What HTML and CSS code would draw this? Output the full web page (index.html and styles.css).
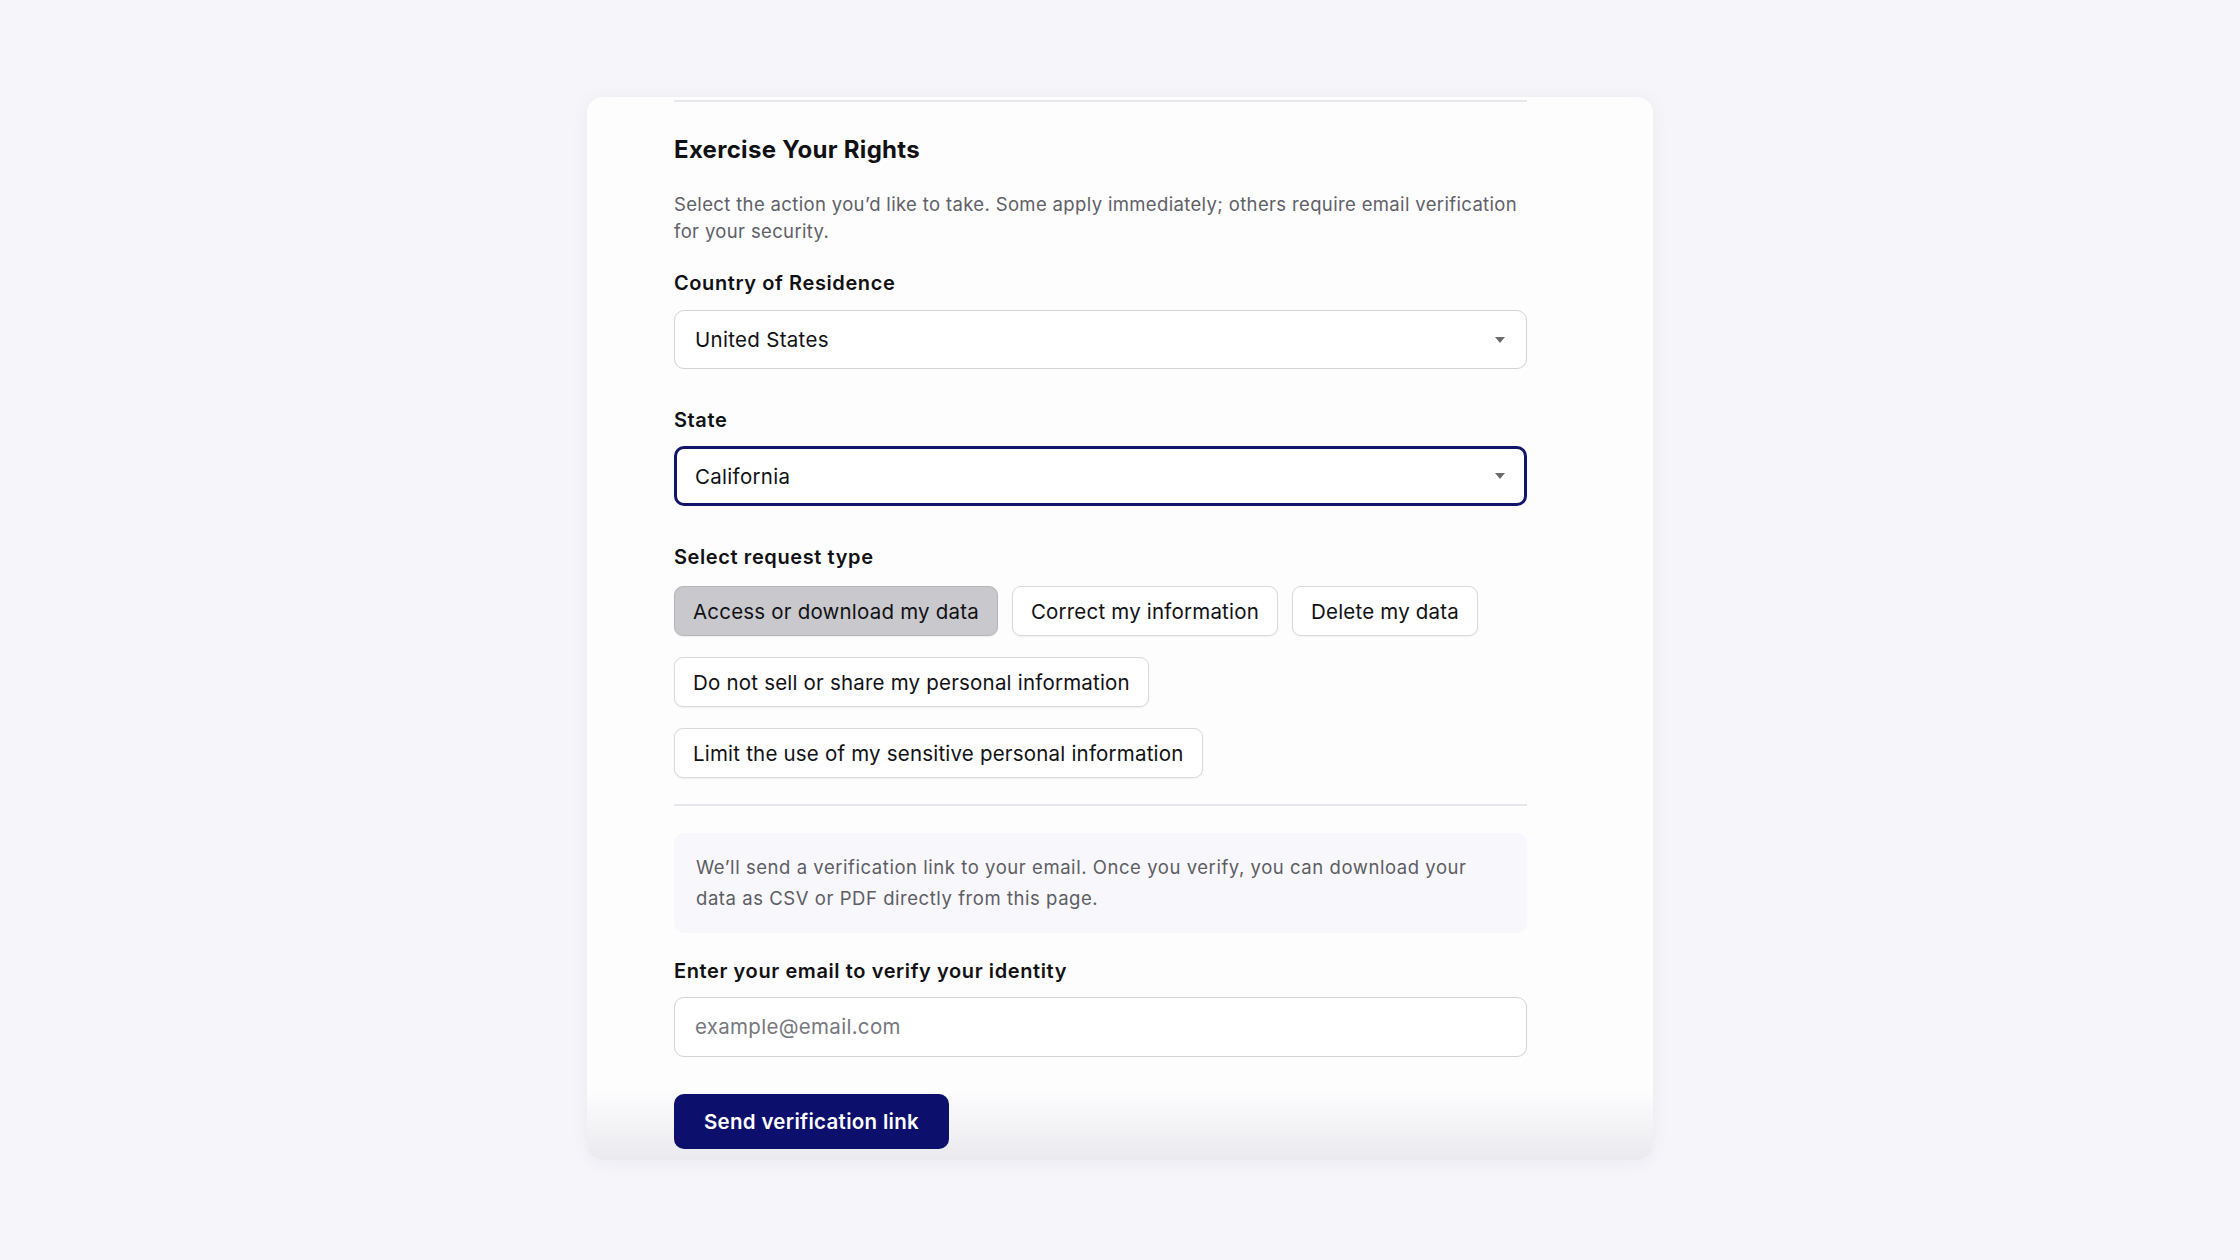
FILE: index.html
```html
<!DOCTYPE html>
<html lang="en">
<head>
  <meta charset="UTF-8" />
  <meta name="viewport" content="width=device-width, initial-scale=1.0"/>
  <title>Exercise Your Rights</title>
  <link rel="stylesheet" href="styles.css">
</head>
<body>
  <div class="rights-card">
    <hr class="divider divider-top" />

    <h2>Exercise Your Rights</h2>
    <p class="intro">Select the action you’d like to take. Some apply immediately; others require email verification for your security.</p>

    <label class="field-label" for="pais">Country of Residence</label>
    <div class="select-box">
      <span>United States</span>
      <svg class="caret" width="10" height="6" viewBox="0 0 10 6"><path d="M0 0h10L5 6z" fill="#6b6b70"/></svg>
    </div>

    <label class="field-label" for="estado">State</label>
    <div class="select-box focused">
      <span>California</span>
      <svg class="caret" width="10" height="6" viewBox="0 0 10 6"><path d="M0 0h10L5 6z" fill="#6b6b70"/></svg>
    </div>

    <label class="field-label">Select request type</label>
    <div class="chips">
      <button class="chip selected">Access or download my data</button>
      <button class="chip">Correct my information</button>
      <button class="chip">Delete my data</button>
      <button class="chip">Do not sell or share my personal information</button>
      <button class="chip">Limit the use of my sensitive personal information</button>
    </div>

    <hr class="divider divider-mid" />

    <div class="info-box">
      We’ll send a verification link to your email. Once you verify, you can download your data as CSV or PDF directly from this page.
    </div>

    <label class="field-label" for="email">Enter your email to verify your identity</label>
    <input type="email" id="email" class="text-input" placeholder="example@email.com" />

    <button class="send-btn">Send verification link</button>
  </div>
</body>
</html>
```

FILE: styles.css
```css
* {
  box-sizing: border-box;
}

body {
  margin: 0;
  padding: 0;
  background: #f5f5fa;
  font-family: 'Inter', 'Liberation Sans', sans-serif;
  color: #111114;
  min-height: 1260px;
}

.rights-card {
  position: relative;
  width: 1066px;
  height: 1063px;
  margin: 97px auto 0;
  padding: 0 126px 0 87px;
  background: #fdfdfe;
  border-radius: 16px;
  box-shadow: 0 2px 18px rgba(30, 30, 70, 0.05);
  overflow: hidden;
}

/* leve sombra abajo, como contenido que sigue */
.rights-card::after {
  content: '';
  position: absolute;
  left: 0; right: 0; bottom: 0;
  height: 70px;
  background: linear-gradient(to bottom, rgba(240, 240, 246, 0), rgba(226, 226, 232, 0.7));
  pointer-events: none;
  z-index: 0;
}

.divider {
  border: none;
  height: 2px;
  background: #e6e6ec;
  margin: 0;
}

.divider-top {
  margin-top: 3px;
}

h2 {
  margin: 33px 0 0;
  font-size: 24px;
  line-height: 30px;
  font-weight: 700;
  letter-spacing: 0.3px;
}

.intro {
  margin: 26px 0 0;
  font-size: 18.5px;
  line-height: 27px;
  letter-spacing: 0.35px;
  color: #606067;
}

.field-label {
  display: block;
  margin-top: 26px;
  font-size: 20px;
  line-height: 24px;
  font-weight: 600;
  letter-spacing: 0.6px;
  color: #111114;
}

.select-box {
  margin-top: 15px;
  height: 59px;
  display: flex;
  align-items: center;
  justify-content: space-between;
  padding: 0 21px 0 20px;
  border: 1.5px solid #d2d2d7;
  border-radius: 10px;
  background: #fff;
  font-size: 20.5px;
  letter-spacing: 0.3px;
}

.select-box + .field-label {
  margin-top: 39px;
}

.select-box.focused {
  margin-top: 14px;
  height: 60px;
  border: 3px solid #12166b;
  padding-left: 18px;
  padding-right: 19px;
}

.chips {
  margin-top: 17px;
  display: flex;
  flex-wrap: wrap;
  column-gap: 14px;
  row-gap: 21px;
}

.chip {
  height: 50px;
  padding: 0 18px;
  font-family: inherit;
  font-size: 20.5px;
  letter-spacing: 0.2px;
  color: #111114;
  background: #fff;
  border: 1.5px solid #d9d9de;
  border-radius: 9px;
  box-shadow: 0 1px 2px rgba(0, 0, 0, 0.06);
  cursor: pointer;
}

.chip.selected {
  background: #c9c9cd;
  border-color: #b4b4b9;
}

.divider-mid {
  height: 1.5px;
  margin-top: 26px;
}

.info-box {
  margin-top: 27px;
  padding: 19px 21px 19px 22px;
  background: #f8f7fb;
  border-radius: 10px;
  font-size: 18.5px;
  line-height: 31px;
  letter-spacing: 0.55px;
  color: #5d5d64;
}

.info-box + .field-label {
  margin-top: 26px;
}

.text-input {
  display: block;
  width: 100%;
  height: 60px;
  margin-top: 14px;
  padding: 0 20px;
  border: 1.5px solid #d2d2d7;
  border-radius: 10px;
  font-family: inherit;
  font-size: 20.5px;
  letter-spacing: 0.3px;
  color: #111114;
  background: #fff;
}

.text-input::placeholder {
  color: #77777d;
}

.send-btn {
  position: relative;
  z-index: 1;
  display: block;
  margin-top: 37px;
  width: 275px;
  height: 55px;
  background: #0c106c;
  color: #fff;
  font-family: inherit;
  font-size: 20.5px;
  letter-spacing: 0.3px;
  font-weight: 600;
  border: none;
  border-radius: 10px;
  cursor: pointer;
}
```
